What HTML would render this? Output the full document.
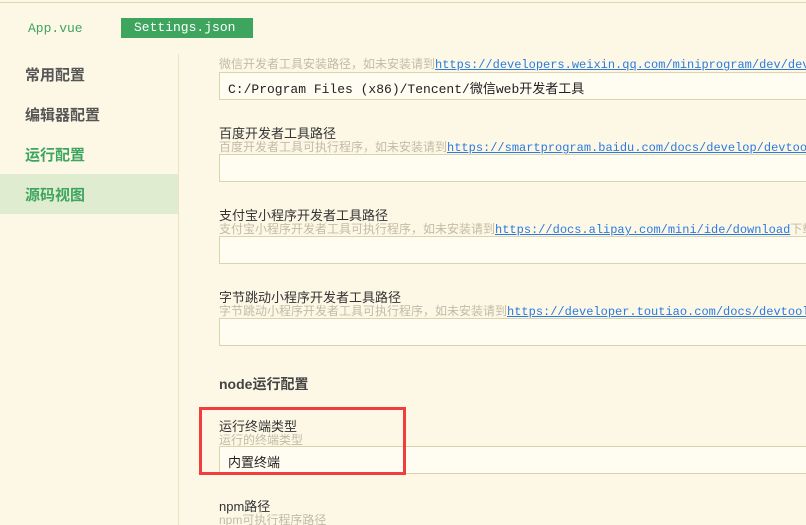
<!DOCTYPE html>
<html><head><meta charset="utf-8"><style>
*{margin:0;padding:0;box-sizing:border-box}
html,body{width:806px;height:525px;overflow:hidden}
body{background:#fdf8e6;font-family:"Liberation Sans","Noto Sans CJK SC",sans-serif;color:#333}
#w{position:relative;width:806px;height:525px;overflow:hidden}
.top{position:absolute;left:0;top:2px;width:806px;height:1px;background:#e0d6b4}
.t1{position:absolute;left:28px;top:21px;font:13px "Liberation Mono","Noto Sans CJK SC",monospace;color:#3ea55f}
.t2{position:absolute;left:121px;top:18px;width:132px;height:20px;background:#3ea55f;color:#fff;font:13px "Liberation Mono","Noto Sans CJK SC",monospace;padding:2px 0 0 13px}
.sep{position:absolute;left:178px;top:54px;width:1px;height:471px;background:#ece3c4}
.nav{position:absolute;left:0;width:178px;height:40px;font-size:15px;font-weight:bold;color:#555;padding:10px 0 0 25px}
.g{color:#3ea55f}
.act{background:#dfeccf}
.a{position:absolute;left:219px;white-space:nowrap}
.lab{font-size:13px;color:#333}
.desc{font-size:12px;color:#c2baa4}
.desc a{font:12px "Liberation Mono",monospace;color:#2a7ae2;text-decoration:underline}
.in{position:absolute;left:219px;width:600px;height:28px;background:#fffcf2;border:1px solid #dcd2ab;font:13px "Liberation Mono","Noto Sans CJK SC",monospace;padding:5px 0 0 8px;color:#222}
.h{font-size:14px;font-weight:bold;color:#444}
.red{position:absolute;left:199px;top:407px;width:207px;height:68px;border:3px solid #f03e3e}
</style></head><body><div id="w">
<div class="top"></div>
<div class="t1">App.vue</div>
<div class="t2">Settings.json</div>
<div class="sep"></div>
<div class="nav" style="top:54px">常用配置</div>
<div class="nav" style="top:94px">编辑器配置</div>
<div class="nav g" style="top:134px">运行配置</div>
<div class="nav g act" style="top:174px">源码视图</div>

<div class="a desc" style="top:55px">微信开发者工具安装路径，如未安装请到<a>https://developers.weixin.qq.com/miniprogram/dev/devtools/download.html</a></div>
<div class="in" style="top:72px">C:/Program Files (x86)/Tencent/微信web开发者工具</div>

<div class="a lab" style="top:123px">百度开发者工具路径</div>
<div class="a desc" style="top:138px">百度开发者工具可执行程序，如未安装请到<a>https://smartprogram.baidu.com/docs/develop/devtools/</a></div>
<div class="in" style="top:154px"></div>

<div class="a lab" style="top:205px">支付宝小程序开发者工具路径</div>
<div class="a desc" style="top:220px">支付宝小程序开发者工具可执行程序，如未安装请到<a>https://docs.alipay.com/mini/ide/download</a>下载</div>
<div class="in" style="top:236px"></div>

<div class="a lab" style="top:287px">字节跳动小程序开发者工具路径</div>
<div class="a desc" style="top:302px">字节跳动小程序开发者工具可执行程序，如未安装请到<a>https://developer.toutiao.com/docs/devtool/</a></div>
<div class="in" style="top:318px"></div>

<div class="a h" style="top:374px">node运行配置</div>

<div class="a lab" style="top:416px">运行终端类型</div>
<div class="a desc" style="top:431px">运行的终端类型</div>
<div class="in" style="top:446px">内置终端</div>
<div class="red"></div>

<div class="a lab" style="top:496px">npm路径</div>
<div class="a desc" style="top:511px">npm可执行程序路径</div>
</div></body></html>
